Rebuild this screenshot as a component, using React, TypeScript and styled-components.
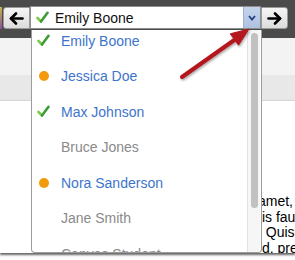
import React from "react";
import styled, { createGlobalStyle } from "styled-components";

type Status = "done" | "pending" | "none";

const students: { name: string; status: Status }[] = [
  { name: "Emily Boone", status: "done" },
  { name: "Jessica Doe", status: "pending" },
  { name: "Max Johnson", status: "done" },
  { name: "Bruce Jones", status: "none" },
  { name: "Nora Sanderson", status: "pending" },
  { name: "Jane Smith", status: "none" },
  { name: "Canvas Student", status: "none" },
];

const pageText = ["amet, consectetur", " is faucibus", "  Quisque", " d, pretium"];

const GlobalStyle = createGlobalStyle`
  html, body {
    margin: 0;
    padding: 0;
    background: #ffffff;
  }
  body {
    font-family: "Liberation Sans", Arial, sans-serif;
    height: 260px;
  }
`;

const Frame = styled.div`
  position: relative;
  width: 295px;
  height: 253px;
  overflow: hidden;
  background: #ffffff;
  box-shadow: 0 2px 2px rgba(0, 0, 0, 0.6);
`;

const Header = styled.div`
  height: 38px;
  background: #4b4b4b;
`;

const Toolbar = styled.div`
  display: flex;
  align-items: flex-start;
`;

const EdgeStrip = styled.div`
  width: 2px;
  height: 22px;
  margin: 7px 1px 0 0;
  background: linear-gradient(#c8b64c, #8c4f9c);
`;

const NavButton = styled.div<{ $side: "left" | "right" }>`
  width: 27px;
  height: 22px;
  margin-top: 7px;
  box-sizing: border-box;
  display: flex;
  align-items: center;
  justify-content: center;
  background: linear-gradient(#f6f6f6, #dcdcdc);
  border: 1px solid #9a9a9a;
  border-radius: ${(p) => (p.$side === "left" ? "3px 0 0 3px" : "0 3px 3px 0")};
`;

const Select = styled.div`
  width: 231px;
  height: 23px;
  margin-top: 6px;
  box-sizing: border-box;
  display: flex;
  align-items: center;
  gap: 6px;
  padding-left: 5px;
  background: #ffffff;
  border: 1px solid #8d8d8d;
  color: #111;
  font-size: 14px;
`;

const DropButton = styled.div`
  margin-left: auto;
  width: 16px;
  height: 21px;
  display: flex;
  align-items: center;
  justify-content: center;
  background: linear-gradient(#c4d4ec, #adc1e2);
  border-left: 1px solid #9fb1cf;
`;

const Band = styled.div<{ $tone: "light" | "dark" }>`
  height: ${(p) => (p.$tone === "light" ? "37px" : "25px")};
  background: ${(p) => (p.$tone === "light" ? "#f3f3f3" : "#e8e8e8")};
  border-bottom: ${(p) => (p.$tone === "dark" ? "1px solid #d6d6d6" : "none")};
`;

const Content = styled.div`
  padding: 93px 0 0 258px;
  font-size: 14px;
  line-height: 15.5px;
  color: #000;
`;

const TextLine = styled.div`
  white-space: pre;
`;

const Dropdown = styled.div`
  position: absolute;
  top: 30px;
  left: 31px;
  width: 231px;
  height: 223px;
  box-sizing: border-box;
  display: flex;
  background: #ffffff;
  border: 1px solid #9c9c9c;
  border-top: none;
  border-radius: 0 0 4px 4px;
  overflow: hidden;
`;

const ItemList = styled.div`
  flex: 1;
  margin-top: -7px;
`;

const Item = styled.div<{ $active: boolean }>`
  height: 35.5px;
  display: flex;
  align-items: center;
  gap: 11px;
  padding-left: 5px;
  font-size: 14px;
  white-space: nowrap;
  color: ${(p) => (p.$active ? "#3d74cc" : "#8a8a8a")};
`;

const IconSlot = styled.div`
  width: 13px;
  height: 13px;
  display: flex;
  align-items: center;
  justify-content: center;
  flex-shrink: 0;
`;

const Dot = styled.div`
  width: 10px;
  height: 10px;
  border-radius: 50%;
  background: #f29a0c;
`;

const ScrollTrack = styled.div`
  width: 13px;
  margin-right: 1px;
  padding: 3px 0 0 3px;
  box-sizing: border-box;
  background: #f6f6f6;
  border-left: 1px solid #e2e2e2;
`;

const ScrollThumb = styled.div`
  width: 7px;
  height: 175px;
  border-radius: 4px;
  background: #c1c1c1;
`;

const Callout = styled.svg`
  position: absolute;
  left: 170px;
  top: 20px;
  overflow: visible;
`;

const Check = () => (
  <svg width="13" height="13" viewBox="0 0 13 13">
    <path d="M1.5 7 L5 10.5" stroke="#7ccc4a" strokeWidth="2.6" strokeLinecap="round" fill="none" />
    <path d="M5 10.5 L11.5 1.8" stroke="#3f9a3a" strokeWidth="2.6" strokeLinecap="round" fill="none" />
  </svg>
);

const Arrow = ({ dir }: { dir: "left" | "right" }) => (
  <svg width="15" height="13" viewBox="0 0 15 13">
    <g transform={dir === "right" ? "translate(15 0) scale(-1 1)" : undefined}>
      <path d="M2 6.5 H13.5" stroke="#000" strokeWidth="2.6" strokeLinecap="round" />
      <path d="M7 1.5 L2 6.5 L7 11.5" stroke="#000" strokeWidth="2.6" strokeLinecap="round" strokeLinejoin="round" fill="none" />
    </g>
  </svg>
);

const Chevron = () => (
  <svg width="8" height="6" viewBox="0 0 8 6">
    <path d="M1 1 L4 4.5 L7 1" stroke="#24407e" strokeWidth="1.8" fill="none" />
  </svg>
);

const StatusIcon = ({ status }: { status: Status }) => (
  <IconSlot>
    {status === "done" && <Check />}
    {status === "pending" && <Dot />}
  </IconSlot>
);

export default function App() {
  return (
    <>
      <GlobalStyle />
      <Frame>
        <Header>
          <Toolbar>
            <EdgeStrip />
            <NavButton $side="left">
              <Arrow dir="left" />
            </NavButton>
            <Select>
              <Check />
              <span>Emily Boone</span>
              <DropButton>
                <Chevron />
              </DropButton>
            </Select>
            <NavButton $side="right">
              <Arrow dir="right" />
            </NavButton>
          </Toolbar>
        </Header>
        <Band $tone="light" />
        <Band $tone="dark" />
        <Content>
          {pageText.map((line) => (
            <TextLine key={line}>{line}</TextLine>
          ))}
        </Content>

        <Dropdown>
          <ItemList>
            {students.map((s) => (
              <Item key={s.name} $active={s.status !== "none"}>
                <StatusIcon status={s.status} />
                {s.name}
              </Item>
            ))}
          </ItemList>
          <ScrollTrack>
            <ScrollThumb />
          </ScrollTrack>
        </Dropdown>

        <Callout width="90" height="70" viewBox="0 0 90 70">
          <defs>
            <filter id="arrowShadow" x="-20%" y="-20%" width="140%" height="140%">
              <feDropShadow dx="1" dy="1.5" stdDeviation="1" floodColor="#000" floodOpacity="0.35" />
            </filter>
          </defs>
          <g filter="url(#arrowShadow)" fill="#b3141c" stroke="#b3141c">
            <path d="M12 57 L65 19.5" strokeWidth="4" strokeLinecap="round" />
            <polygon points="79,9 68.5,25.2 60.3,13.8" strokeWidth="1" strokeLinejoin="round" />
          </g>
        </Callout>
      </Frame>
    </>
  );
}
